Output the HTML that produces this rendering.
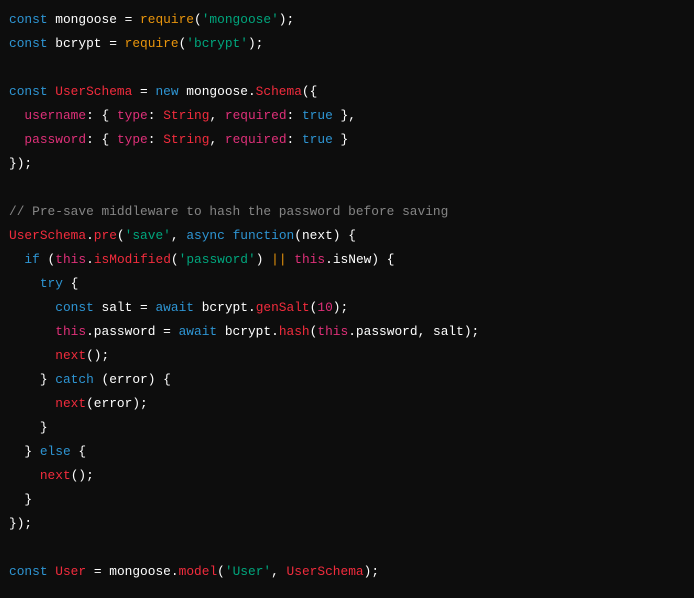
<!DOCTYPE html><html><head><style>
body{margin:0;background:#0d0d0d;width:694px;height:598px;overflow:hidden}
pre{margin:0;padding:8px 0 0 9px;font-family:"Liberation Mono",monospace;font-size:12.85px;line-height:24px;color:#fff}
.k{color:#2e95d3}.o{color:#e9950c}.s{color:#00a67d}.r{color:#f22c3d}.p{color:#df3079}.c{color:#858585}
</style></head><body><pre><span class="k">const</span> mongoose = <span class="o">require</span>(<span class="s">'mongoose'</span>);
<span class="k">const</span> bcrypt = <span class="o">require</span>(<span class="s">'bcrypt'</span>);

<span class="k">const</span> <span class="r">UserSchema</span> = <span class="k">new</span> mongoose.<span class="r">Schema</span>({
  <span class="p">username</span>: { <span class="p">type</span>: <span class="r">String</span>, <span class="p">required</span>: <span class="k">true</span> },
  <span class="p">password</span>: { <span class="p">type</span>: <span class="r">String</span>, <span class="p">required</span>: <span class="k">true</span> }
});

<span class="c">// Pre-save middleware to hash the password before saving</span>
<span class="r">UserSchema</span>.<span class="r">pre</span>(<span class="s">'save'</span>, <span class="k">async</span> <span class="k">function</span>(next) {
  <span class="k">if</span> (<span class="p">this</span>.<span class="r">isModified</span>(<span class="s">'password'</span>) <span class="o">||</span> <span class="p">this</span>.isNew) {
    <span class="k">try</span> {
      <span class="k">const</span> salt = <span class="k">await</span> bcrypt.<span class="r">genSalt</span>(<span class="p">10</span>);
      <span class="p">this</span>.password = <span class="k">await</span> bcrypt.<span class="r">hash</span>(<span class="p">this</span>.password, salt);
      <span class="r">next</span>();
    } <span class="k">catch</span> (error) {
      <span class="r">next</span>(error);
    }
  } <span class="k">else</span> {
    <span class="r">next</span>();
  }
});

<span class="k">const</span> <span class="r">User</span> = mongoose.<span class="r">model</span>(<span class="s">'User'</span>, <span class="r">UserSchema</span>);
</pre></body></html>
